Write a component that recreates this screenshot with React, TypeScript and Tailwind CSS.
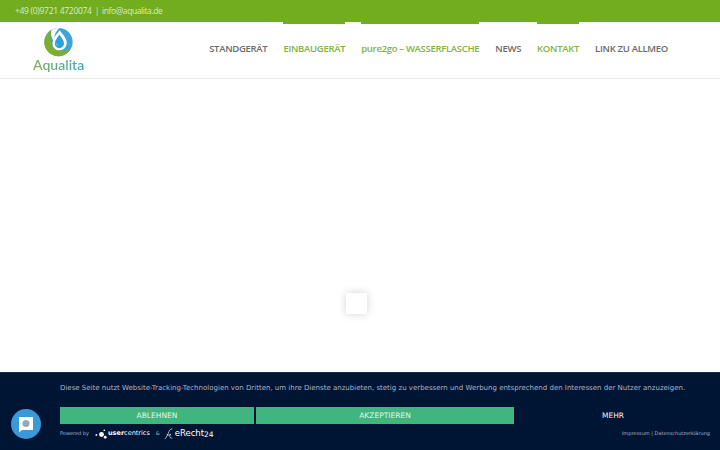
const navItems = [
  { label: "STANDGERÄT", active: false },
  { label: "EINBAUGERÄT", active: true },
  { label: "pure2go – WASSERFLASCHE", active: true },
  { label: "NEWS", active: false },
  { label: "KONTAKT", active: true },
  { label: "LINK ZU ALLMEO", active: false },
];

function Logo() {
  return (
    <div className="flex flex-col items-center">
      <svg width="31" height="31" viewBox="0 0 34 33">
        <circle cx="17" cy="16" r="15.500" fill="#3fa5d8" />
        <path d="M1.500 14C0.500 25 9 32 18 31.500C25 31 29 26 30 23C25 26 19 27 14 24C9 21 7 14 9 3C5 5 3 10 1.500 14Z" fill="#7fae2b" />
        <path d="M9 3C12 1 15 0.500 18 0.500C13 5 11 11 14 17C11 15 8 10 9 3Z" fill="#ffffff" />
        <path d="M18 3C21 7 26 11 26 17C26 22 22 25 18 25C13 25 10 21 10.500 17C11 11 15 8 18 3Z" fill="#ffffff" />
        <path d="M18 8C20 11 23 14 23 17.500C23 20.500 20.500 22.500 18 22.500C15 22.500 13 20 13 17.500C13 14 16 11 18 8Z" fill="#2f9fd8" />
        <path d="M14.500 18C15 20 16.500 21 18 21C16 20.500 15.500 19 15.500 17.500Z" fill="#bfe3f3" />
      </svg>
      <span className="mt-[-1px] bg-gradient-to-r from-[#7fb04a] to-[#3aa7b8] bg-clip-text font-['Lato',sans-serif] text-[14px] leading-[16px] font-semibold text-transparent">
        Aqualita
      </span>
    </div>
  );
}

function Header() {
  return (
    <header className="relative border-b border-[#e9e9e9] bg-white">
      <div className="flex h-[22px] items-center bg-[#71ad1f] pl-[15px] font-['Open_Sans',sans-serif] text-[8.500px] tracking-[-0.3px] text-[#dcebc4]">
        <span>+49 (0)9721 4720074</span>
        <span className="mx-[3px]">|</span>
        <span className="tracking-[-0.42px]">info@aqualita.de</span>
      </div>
      <div className="flex h-[56px] items-start justify-between pr-[52px] pl-[33px]">
        <div className="pt-[5px]">
          <Logo />
        </div>
        <nav className="mt-[-1px] flex gap-[16px] font-['Open_Sans',sans-serif] text-[9.500px] font-semibold tracking-[-0.3px]">
          {navItems.map((item) => (
            <a
              key={item.label}
              className={
                item.active
                  ? "block h-[50px] border-t-[3px] border-[#71ad1f] pt-[18px] leading-[14px] whitespace-nowrap text-[#82b33e]"
                  : "block h-[50px] border-t-[3px] border-transparent pt-[18px] leading-[14px] whitespace-nowrap text-[#6b6b6b]"
              }
            >
              {item.label}
            </a>
          ))}
        </nav>
      </div>
    </header>
  );
}

function Powered() {
  return (
    <div className="flex items-center font-['DejaVu_Sans',sans-serif] text-white">
      <span className="text-[5px] text-[#aab4c4]">Powered by</span>
      <svg className="ml-[6px]" width="13" height="12" viewBox="0 0 14 12">
        <circle cx="7" cy="6.500" r="2.600" fill="#fff" />
        <circle cx="1.500" cy="7" r="1" fill="#fff" />
        <circle cx="10" cy="2" r="0.900" fill="#fff" />
        <circle cx="11" cy="9.500" r="1.500" fill="#fff" />
      </svg>
      <span className="text-[6.500px] font-bold">user</span>
      <span className="text-[6.500px]">centrics</span>
      <span className="ml-[6px] text-[5px] text-[#aab4c4]">&amp;</span>
      <svg className="ml-[4px]" width="10" height="14" viewBox="0 0 12 14" fill="none" stroke="#fff" strokeWidth="0.8">
        <path d="M1 13C3 11 5 7 6 4C6.500 2 8 1 10 1M4 7C3 9 6 9 8 7C6 10 7 12 10 12" />
      </svg>
      <span className="ml-px text-[8.500px]">eRecht</span>
      <span className="mt-[2px] text-[7.500px]">24</span>
    </div>
  );
}

function CookieBanner() {
  return (
    <div className="absolute inset-x-0 bottom-0 h-[78px] border-t border-[#1d2f4e] bg-[#001433] pr-[10px] pl-[60px] font-['DejaVu_Sans',sans-serif]">
      <p className="pt-[9px] text-[7px] leading-[12px] whitespace-nowrap text-[#aab6c8]">
        Diese Seite nutzt Website-Tracking-Technologien von Dritten, um ihre Dienste anzubieten, stetig zu verbessern und Werbung entsprechend den Interessen der Nutzer anzuzeigen.
      </p>
      <div className="mt-[13px] flex gap-[2px] text-[7.500px]">
        <button className="h-[17px] w-[194px] bg-[#41b580] text-[#e3f4ec]">ABLEHNEN</button>
        <button className="h-[17px] w-[258px] bg-[#41b580] text-[#e3f4ec]">AKZEPTIEREN</button>
        <button className="h-[17px] w-[194px] text-[#eef1f5]">MEHR</button>
      </div>
      <div className="mt-[1px] flex h-[17px] items-center justify-between">
        <Powered />
        <span className="text-[5px] text-[#aab4c4]">Impressum | Datenschutzerklärung</span>
      </div>
    </div>
  );
}

function ChatButton() {
  return (
    <div className="absolute top-[409px] left-[11px] flex h-[30px] w-[30px] items-center justify-center rounded-full bg-[#3a9ad9]">
      <svg width="16" height="17" viewBox="0 0 16 17">
        <path d="M1 1H15V14H4L1 16.500Z" fill="#ffffff" />
        <circle cx="8" cy="7.500" r="3.500" fill="#8fa9bd" />
      </svg>
    </div>
  );
}

export default function App() {
  return (
    <div className="relative h-[450px] w-[720px] overflow-hidden bg-white">
      <Header />
      <main className="pt-[214px] pl-[346px]">
        <div className="h-[21px] w-[21px] bg-white shadow-[0_0_8px_rgba(0,0,0,0.18)]" />
      </main>
      <CookieBanner />
      <ChatButton />
    </div>
  );
}
